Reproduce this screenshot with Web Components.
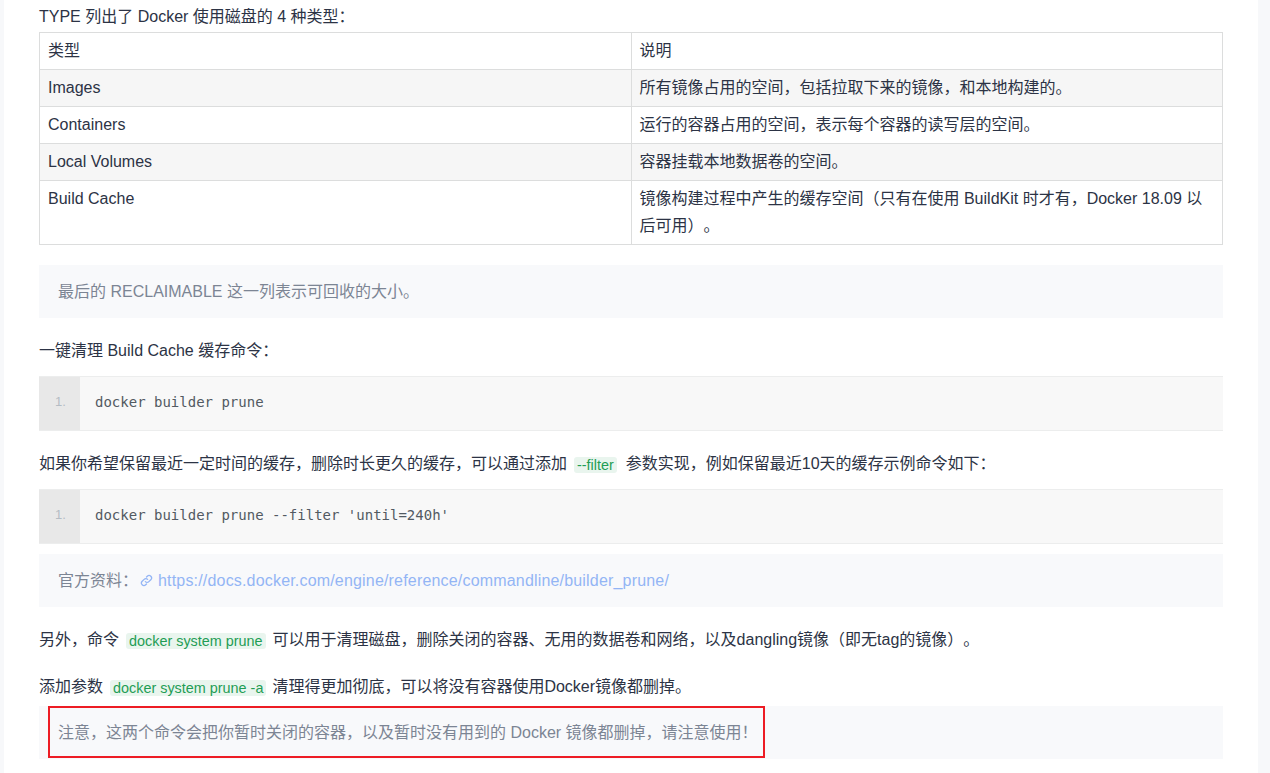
<!DOCTYPE html>
<html lang="zh">
<head>
<meta charset="utf-8">
<title>Docker</title>
<style>
  html, body { margin: 0; height: 100%; overflow: hidden; background: #fff; }
</style>
</head>
<body>
<doc-page>
  <doc-para style="--top:3px;--bottom:2px">TYPE 列出了 Docker 使用磁盘的 4 种类型：</doc-para>
  <doc-table></doc-table>
  <doc-quote style="--top:20px">最后的 RECLAIMABLE 这一列表示可回收的大小。</doc-quote>
  <doc-para style="--top:19px;--bottom:12px">一键清理 Build Cache 缓存命令：</doc-para>
  <doc-code>docker builder prune</doc-code>
  <doc-para style="--top:19px;--bottom:12px">如果你希望保留最近一定时间的缓存，删除时长更久的缓存，可以通过添加<doc-tag style="--gap:9px">--filter</doc-tag>参数实现，例如保留最近10天的缓存示例命令如下：</doc-para>
  <doc-code>docker builder prune --filter 'until=240h'</doc-code>
  <doc-quote style="--top:10px"><span>官方资料：</span><doc-link href="#">https://docs.docker.com/engine/reference/commandline/builder_prune/</doc-link></doc-quote>
  <doc-para style="--top:19px">另外，命令<doc-tag style="--gap:7px">docker system prune</doc-tag>可以用于清理磁盘，删除关闭的容器、无用的数据卷和网络，以及dangling镜像（即无tag的镜像）。</doc-para>
  <doc-para style="--top:20px;--bottom:6px">添加参数<doc-tag style="--gap:6px">docker system prune -a</doc-tag>清理得更加彻底，可以将没有容器使用Docker镜像都删掉。</doc-para>
  <doc-quote marked>注意，这两个命令会把你暂时关闭的容器，以及暂时没有用到的 Docker 镜像都删掉，请注意使用！</doc-quote>
</doc-page>

<script>
const FONT = '"Liberation Sans", "Noto Sans CJK SC", sans-serif';

class DocPage extends HTMLElement {
  constructor() {
    super();
    this.attachShadow({ mode: "open" });
    this.shadowRoot.innerHTML = `
      <style>
        :host {
          display: flex;
          height: 773px;
          font: 16px/27px ${FONT};
          color: #2c3345;
          text-spacing-trim: space-all;
        }
        .strip { background: #f7f8fa; }
        .left { width: 4px; }
        .right { width: 12px; }
        main { flex: 1; min-width: 0; padding: 0 35px; }
      </style>
      <div class="strip left"></div>
      <main><slot></slot></main>
      <div class="strip right"></div>
    `;
  }
}

class DocPara extends HTMLElement {
  constructor() {
    super();
    this.attachShadow({ mode: "open" });
    this.shadowRoot.innerHTML = `
      <style>
        :host {
          display: block;
          height: 27px;
          margin: var(--top, 0) 0 var(--bottom, 0);
          white-space: nowrap;
        }
      </style>
      <slot></slot>
    `;
  }
}

class DocTag extends HTMLElement {
  constructor() {
    super();
    this.attachShadow({ mode: "open" });
    this.shadowRoot.innerHTML = `
      <style>
        :host {
          display: inline-block;
          margin: 0 var(--gap, 8px) 0 7px;
          padding: 0 3px;
          height: 16px;
          line-height: 16px;
          font-size: 14.4px;
          color: #1f9d55;
          background: #e9f5ee;
          border-radius: 3px;
          vertical-align: -1px;
        }
      </style>
      <slot></slot>
    `;
  }
}

class DocLink extends HTMLElement {
  constructor() {
    super();
    this.attachShadow({ mode: "open" });
    this.shadowRoot.innerHTML = `<style>
        :host { display: inline; color: #93b5f5; }
        svg { width: 13px; height: 13px; vertical-align: -1px; margin: 0 5px 0 2px; }
        a { color: inherit; text-decoration: none; letter-spacing: .18px; }
      </style><svg viewBox="0 0 16 16" fill="none" stroke="#93b5f5" stroke-width="1.6" stroke-linecap="round">
        <path d="M6.6 9.4a3 3 0 0 0 4.3 0l2.4-2.4a3 3 0 0 0-4.3-4.3L8 3.7"/>
        <path d="M9.4 6.6a3 3 0 0 0-4.3 0L2.7 9a3 3 0 0 0 4.3 4.3l1-1"/>
      </svg><a><slot></slot></a>`;
    this.shadowRoot.querySelector("a").href = this.getAttribute("href") || "#";
  }
}

class DocQuote extends HTMLElement {
  constructor() {
    super();
    this.attachShadow({ mode: "open" });
    this.shadowRoot.innerHTML = `
      <style>
        :host {
          display: block;
          position: relative;
          margin-top: var(--top, 0);
          padding: 13px 19px;
          background: #f8f9fb;
          color: #7c8594;
        }
        .mark {
          position: absolute;
          left: 9px;
          top: 0;
          width: 713px;
          height: 48px;
          border: 2px solid #ed1c24;
        }
      </style>
      <slot></slot>
    `;
    if (this.hasAttribute("marked")) {
      const mark = document.createElement("div");
      mark.className = "mark";
      this.shadowRoot.appendChild(mark);
    }
  }
}

class DocCode extends HTMLElement {
  constructor() {
    super();
    this.attachShadow({ mode: "open" });
    this.shadowRoot.innerHTML = `
      <style>
        :host {
          display: flex;
          height: 53px;
          background: #f8f8f8;
          border-top: 1px solid #eceded;
          border-bottom: 1px solid #eceded;
          line-height: 50px;
          font-size: 13px;
        }
        .num {
          width: 41px;
          padding-left: 16px;
          box-sizing: border-box;
          background: #e8e8e8;
          color: #b4bcc4;
          font-family: ${FONT};
        }
        code {
          padding-left: 15px;
          font: 14px/50px "DejaVu Sans Mono", monospace;
          color: #525a62;
        }
      </style>
      <div class="num">1.</div>
      <code><slot></slot></code>
    `;
  }
}

class DocTable extends HTMLElement {
  constructor() {
    super();
    this.attachShadow({ mode: "open" });
    const rows = [
      ["类型", "说明"],
      ["Images", "所有镜像占用的空间，包括拉取下来的镜像，和本地构建的。"],
      ["Containers", "运行的容器占用的空间，表示每个容器的读写层的空间。"],
      ["Local Volumes", "容器挂载本地数据卷的空间。"],
      ["Build Cache", "镜像构建过程中产生的缓存空间（只有在使用 BuildKit 时才有，Docker 18.09 以后可用）。"]
    ];
    const body = rows.map(r => `<tr><td>${r[0]}</td><td>${r[1]}</td></tr>`).join("");
    this.shadowRoot.innerHTML = `
      <style>
        :host { display: block; }
        table { width: 100%; table-layout: fixed; border-collapse: collapse; }
        td { border: 1px solid #dcdddd; padding: 4px 8px 5px; vertical-align: top; }
        tr:nth-child(even) td { background: #f6f6f6; }
      </style>
      <table>${body}</table>
    `;
  }
}

customElements.define("doc-page", DocPage);
customElements.define("doc-para", DocPara);
customElements.define("doc-tag", DocTag);
customElements.define("doc-link", DocLink);
customElements.define("doc-quote", DocQuote);
customElements.define("doc-code", DocCode);
customElements.define("doc-table", DocTable);
</script>
</body>
</html>
